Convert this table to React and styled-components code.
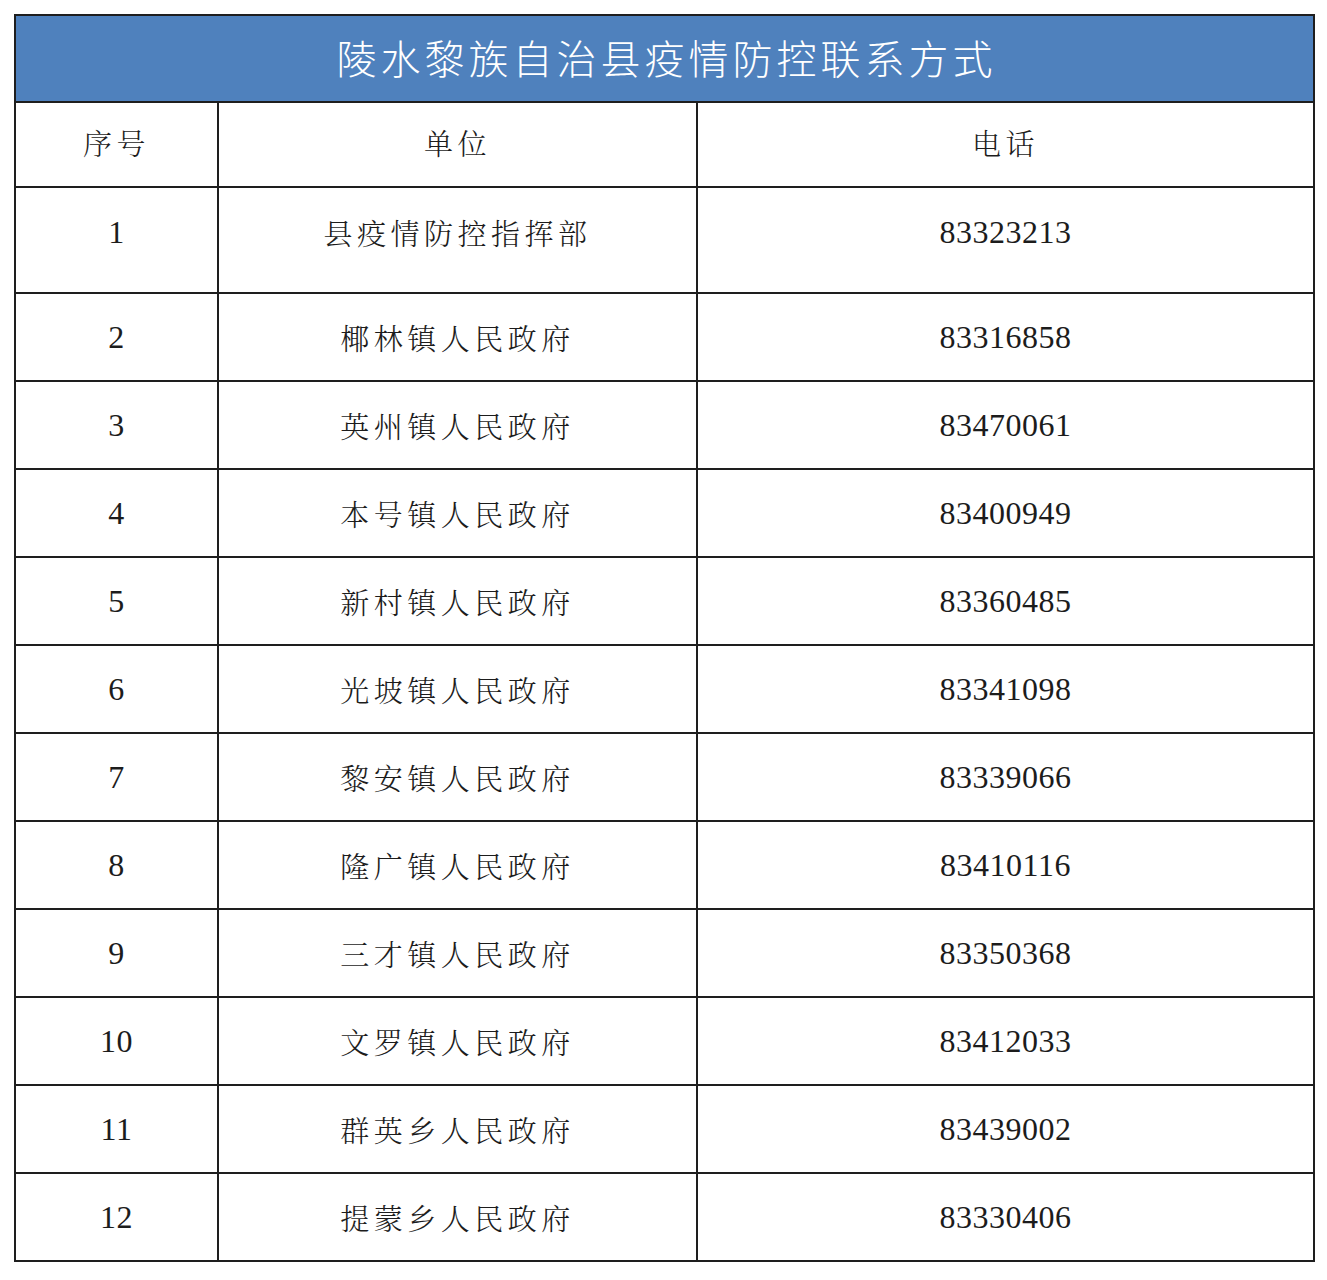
import styled, { createGlobalStyle } from "styled-components";

const GlobalStyle = createGlobalStyle`
  body {
    margin: 0;
    background: #fff;
  }
`;

const Page = styled.div`
  padding: 14px 14px 16px 14px;
  font-family: "Liberation Serif", "Noto Serif CJK SC", "Noto Sans CJK SC", serif;
  color: #1c1c1c;
`;

const Table = styled.table`
  width: 1299px;
  border-collapse: collapse;
  table-layout: fixed;
  border: 2px solid #1e1e1e;
`;

const TitleCell = styled.th`
  height: 81px;
  background: #4f81bd;
  color: #fff;
  font-family: "Noto Sans CJK SC", sans-serif;
  font-weight: 300;
  font-size: 40px;
  letter-spacing: 4px;
  text-align: center;
  vertical-align: middle;
  padding: 0 0 4px 4px;
  border: 2px solid #1e1e1e;
`;

const Cell = styled.td`
  height: ${(p) => p.$h || 86}px;
  border: 2px solid #1e1e1e;
  text-align: center;
  vertical-align: middle;
  padding: 0 0 ${(p) => p.$pb || 0}px ${(p) => p.$pl || 0}px;
  font-size: ${(p) => (p.$cjk ? 29 : 32)}px;
  font-family: ${(p) =>
    p.$cjk
      ? `"Noto Serif CJK SC", "Noto Sans CJK SC", sans-serif`
      : `"Liberation Serif", serif`};
  font-weight: ${(p) => (p.$cjk ? 300 : 400)};
  letter-spacing: ${(p) => (p.$cjk ? 4.5 : 0.5)}px;
  white-space: nowrap;
`;

const rows = [
  ["县疫情防控指挥部", "83323213"],
  ["椰林镇人民政府", "83316858"],
  ["英州镇人民政府", "83470061"],
  ["本号镇人民政府", "83400949"],
  ["新村镇人民政府", "83360485"],
  ["光坡镇人民政府", "83341098"],
  ["黎安镇人民政府", "83339066"],
  ["隆广镇人民政府", "83410116"],
  ["三才镇人民政府", "83350368"],
  ["文罗镇人民政府", "83412033"],
  ["群英乡人民政府", "83439002"],
  ["提蒙乡人民政府", "83330406"],
];

const App = () => {
  return (
    <Page>
      <GlobalStyle />
      <Table>
        <colgroup>
          <col style={{ width: 203 }} />
          <col style={{ width: 479 }} />
          <col style={{ width: 617 }} />
        </colgroup>
        <thead>
          <tr>
            <TitleCell colSpan={3}>陵水黎族自治县疫情防控联系方式</TitleCell>
          </tr>
        </thead>
        <tbody>
          <tr>
            <Cell $cjk $h={79} $pb={4}>序号</Cell>
            <Cell $cjk $h={79} $pb={4}>单位</Cell>
            <Cell $cjk $h={79} $pb={4}>电话</Cell>
          </tr>
          {rows.map(([unit, phone], i) => {
            const first = i === 0;
            const h = first ? 88 : 86;
            const pb = first ? 16 : 0;
            return (
              <tr key={i}>
                <Cell $h={h} $pb={pb}>{i + 1}</Cell>
                <Cell $cjk $h={h} $pb={pb}>{unit}</Cell>
                <Cell $h={h} $pb={pb}>{phone}</Cell>
              </tr>
            );
          })}
        </tbody>
      </Table>
    </Page>
  );
};

export default App;
